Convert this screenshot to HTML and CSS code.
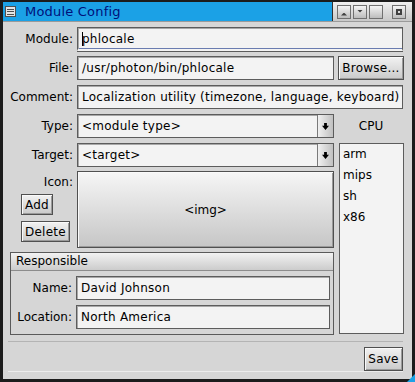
FILE: index.html
```html
<!DOCTYPE html>
<html lang="en">
<head>
    <meta charset="UTF-8">
    <title>Module Config</title>
    <link rel="stylesheet" href="styles.css">
</head>
<body>
    <div class="window">
        <div class="titlebar">
            <div class="title-main">
                <span class="menu-icon"><i></i><i></i><i></i></span>
                <span class="title-text">Module Config</span>
            </div>
            <div class="title-buttons">
                <span class="tbtn tbtn-back"><b></b></span>
                <span class="tbtn tbtn-front"><b></b></span>
                <span class="tbtn"></span>
                <span class="tbtn tbtn-close"><b></b></span>
            </div>
        </div>

        <div class="content">
            <div class="form">
                <label class="lbl">Module:</label>
                <div class="field wide focused"><span class="caret"></span>phlocale</div>

                <label class="lbl">File:</label>
                <div class="field">/usr/photon/bin/phlocale</div>
                <button class="btn">Browse...</button>

                <label class="lbl">Comment:</label>
                <div class="field wide">Localization utility (timezone, language, keyboard)</div>

                <label class="lbl">Type:</label>
                <div class="field combo">&lt;module type&gt;<span class="arrow"><b></b></span></div>
                <div class="cpu-title">CPU</div>

                <label class="lbl">Target:</label>
                <div class="field combo">&lt;target&gt;<span class="arrow"><b></b></span></div>
                <ul class="cpu-list">
                    <li>arm</li>
                    <li>mips</li>
                    <li>sh</li>
                    <li>x86</li>
                </ul>

                <div class="icon-col">
                    <label class="lbl">Icon:</label>
                    <button class="btn small">Add</button>
                    <button class="btn small">Delete</button>
                </div>
                <div class="img-btn">&lt;img&gt;</div>

                <div class="group">
                    <div class="group-head">Responsible</div>
                    <div class="group-body">
                        <label class="lbl">Name:</label>
                        <div class="field">David Johnson</div>
                        <label class="lbl">Location:</label>
                        <div class="field">North America</div>
                    </div>
                </div>
            </div>

            <div class="footer">
                <button class="btn">Save</button>
            </div>
        </div>
        <span class="grip"></span>
    </div>
</body>
</html>
```

FILE: styles.css
```css
html, body {
    margin: 0;
    padding: 0;
    background: #000;
}
body {
    font-family: "DejaVu Sans", Verdana, sans-serif;
    font-size: 12px;
    color: #000;
}
.window {
    position: relative;
    width: 409px;
    height: 377px;
    border: 3px solid #1c1c1c;
    border-top-width: 2px;
    background: #d6d6d6;
    display: flex;
    flex-direction: column;
}
.titlebar {
    height: 19px;
    display: flex;
    border-bottom: 1px solid #9a9a9a;
}
.title-main {
    flex: 1;
    background: #1ba1e6;
    display: flex;
    align-items: center;
    border-right: 1px solid #303030;
}
.menu-icon {
    width: 11px;
    height: 11px;
    margin-left: 2px;
    background: #e4e4e4;
    border: 1px solid #505050;
    box-sizing: border-box;
    display: flex;
    flex-direction: column;
    justify-content: space-evenly;
    padding: 0 1px;
}
.menu-icon i {
    display: block;
    height: 1px;
    background: #505050;
}
.title-text {
    margin-left: 9px;
    color: #00107a;
    font-size: 13px;
    letter-spacing: 0.2px;
}
.title-buttons {
    width: 79px;
    background: linear-gradient(#f0f0f0, #c8c8c8);
    display: flex;
    align-items: center;
    padding-left: 4px;
    box-sizing: border-box;
}
.tbtn {
    width: 14px;
    height: 14px;
    box-sizing: border-box;
    border: 1px solid #707070;
    background: linear-gradient(#f4f4f4, #bcbcbc);
    margin-right: 2px;
    position: relative;
}
.tbtn-back b {
    position: absolute;
    left: 3px;
    bottom: 2px;
    width: 6px;
    height: 3px;
    background: #404040;
    clip-path: polygon(50% 0, 100% 100%, 0 100%);
}
.tbtn-front b {
    position: absolute;
    left: 3px;
    top: 4px;
    width: 6px;
    height: 3px;
    background: #404040;
    clip-path: polygon(0 0, 100% 0, 50% 100%);
}
.tbtn-close {
    margin-left: 7px;
}
.tbtn-close b {
    position: absolute;
    left: 3px;
    top: 3px;
    width: 6px;
    height: 6px;
    box-sizing: border-box;
    border: 2px solid #404040;
}
.content {
    flex: 1;
    display: flex;
    flex-direction: column;
    padding: 5px 8px 0 5px;
}
.form {
    display: grid;
    grid-template-columns: 65px 257px 66px;
    column-gap: 4px;
    row-gap: 5px;
    grid-template-rows: 24px 24px 24px 24px 24px 76px 82px;
}
.lbl {
    text-align: right;
    line-height: 24px;
    white-space: nowrap;
}
.field {
    box-sizing: border-box;
    height: 24px;
    border: 1px solid #5c5c5c;
    box-shadow: inset 1px 1px 0 #a8a8a8;
    background: #f3f3f3;
    padding: 0 0 0 4px;
    line-height: 22px;
    letter-spacing: 0.25px;
    white-space: nowrap;
    overflow: hidden;
    position: relative;
}
.field.wide {
    grid-column: 2 / 4;
    margin-right: 1px;
}
.field.focused {
    border-bottom: 2px solid #f3f3f3;
    box-shadow: inset 1px 1px 0 #a8a8a8, 0 1px 0 #5c5c5c, inset 0 -1px 0 #6a7cb0;
}
.caret {
    display: inline-block;
    width: 1px;
    height: 14px;
    background: #000;
    vertical-align: -3px;
    margin-right: -1px;
}
.combo {
    padding-right: 16px;
}
.arrow {
    position: absolute;
    top: 0;
    right: 0;
    width: 15px;
    height: 22px;
    border-left: 1px solid #7a7a7a;
    background: linear-gradient(90deg, #f0f0f0, #c0c0c0);
}
.arrow b {
    position: absolute;
    left: 4px;
    top: 8px;
    width: 7px;
    height: 7px;
    background: #000;
    clip-path: polygon(30% 0, 70% 0, 70% 40%, 100% 40%, 50% 100%, 0 40%, 30% 40%);
}
.btn {
    font-family: inherit;
    font-size: 12px;
    letter-spacing: 0.25px;
    box-sizing: border-box;
    height: 24px;
    padding: 0 3px;
    border: 1px solid #505050;
    box-shadow: inset 1px 1px 0 #fafafa, inset -1px -1px 0 #9a9a9a;
    background: linear-gradient(#f2f2f2, #cacaca);
    color: #000;
    margin: 0;
}
.form > .btn {
    width: 66px;
}
.cpu-title {
    text-align: center;
    line-height: 24px;
}
.cpu-list {
    grid-column: 3;
    grid-row: 5 / 8;
    margin: 0 0 0 1px;
    padding: 0 0 0 3px;
    list-style: none;
    border: 1px solid #5c5c5c;
    background: #f3f3f3;
    box-sizing: border-box;
    height: 191px;
}
.cpu-list li {
    line-height: 21px;
}
.icon-col {
    display: flex;
    flex-direction: column;
    align-items: flex-start;
    margin-top: -2px;
}
.icon-col .lbl {
    align-self: stretch;
}
.btn.small {
    margin-left: 13px;
    margin-bottom: 6px;
}
.img-btn {
    border: 1px solid #505050;
    box-shadow: inset 1px 1px 0 #fafafa, inset -1px -1px 0 #9a9a9a;
    background: linear-gradient(#f6f6f6, #c6c6c6);
    display: flex;
    align-items: center;
    justify-content: center;
    margin-top: -1px;
}
.group {
    grid-column: 1 / 3;
    margin: -1px 0 0 2px;
    border: 1px solid #5a5a5a;
    height: 83px;
    box-sizing: border-box;
}
.group-head {
    height: 17px;
    line-height: 17px;
    padding-left: 5px;
    background: linear-gradient(#f2f2f2, #cccccc);
    border-bottom: 1px solid #8c8c8c;
}
.group-body {
    display: grid;
    grid-template-columns: 61px 254px;
    column-gap: 4px;
    row-gap: 5px;
    padding-top: 5px;
}
.footer {
    margin-top: 6px;
    border-top: 1px solid #b4b4b4;
    box-shadow: 0 1px 0 #ececec;
    display: flex;
    justify-content: flex-end;
    padding-top: 5px;
    margin-right: 1px;
}
.footer .btn {
    width: 39px;
}
.grip {
    position: absolute;
    right: -3px;
    bottom: -3px;
    width: 8px;
    height: 8px;
    background: #1ba1e6;
    clip-path: polygon(100% 0, 100% 100%, 0 100%);
}
```
